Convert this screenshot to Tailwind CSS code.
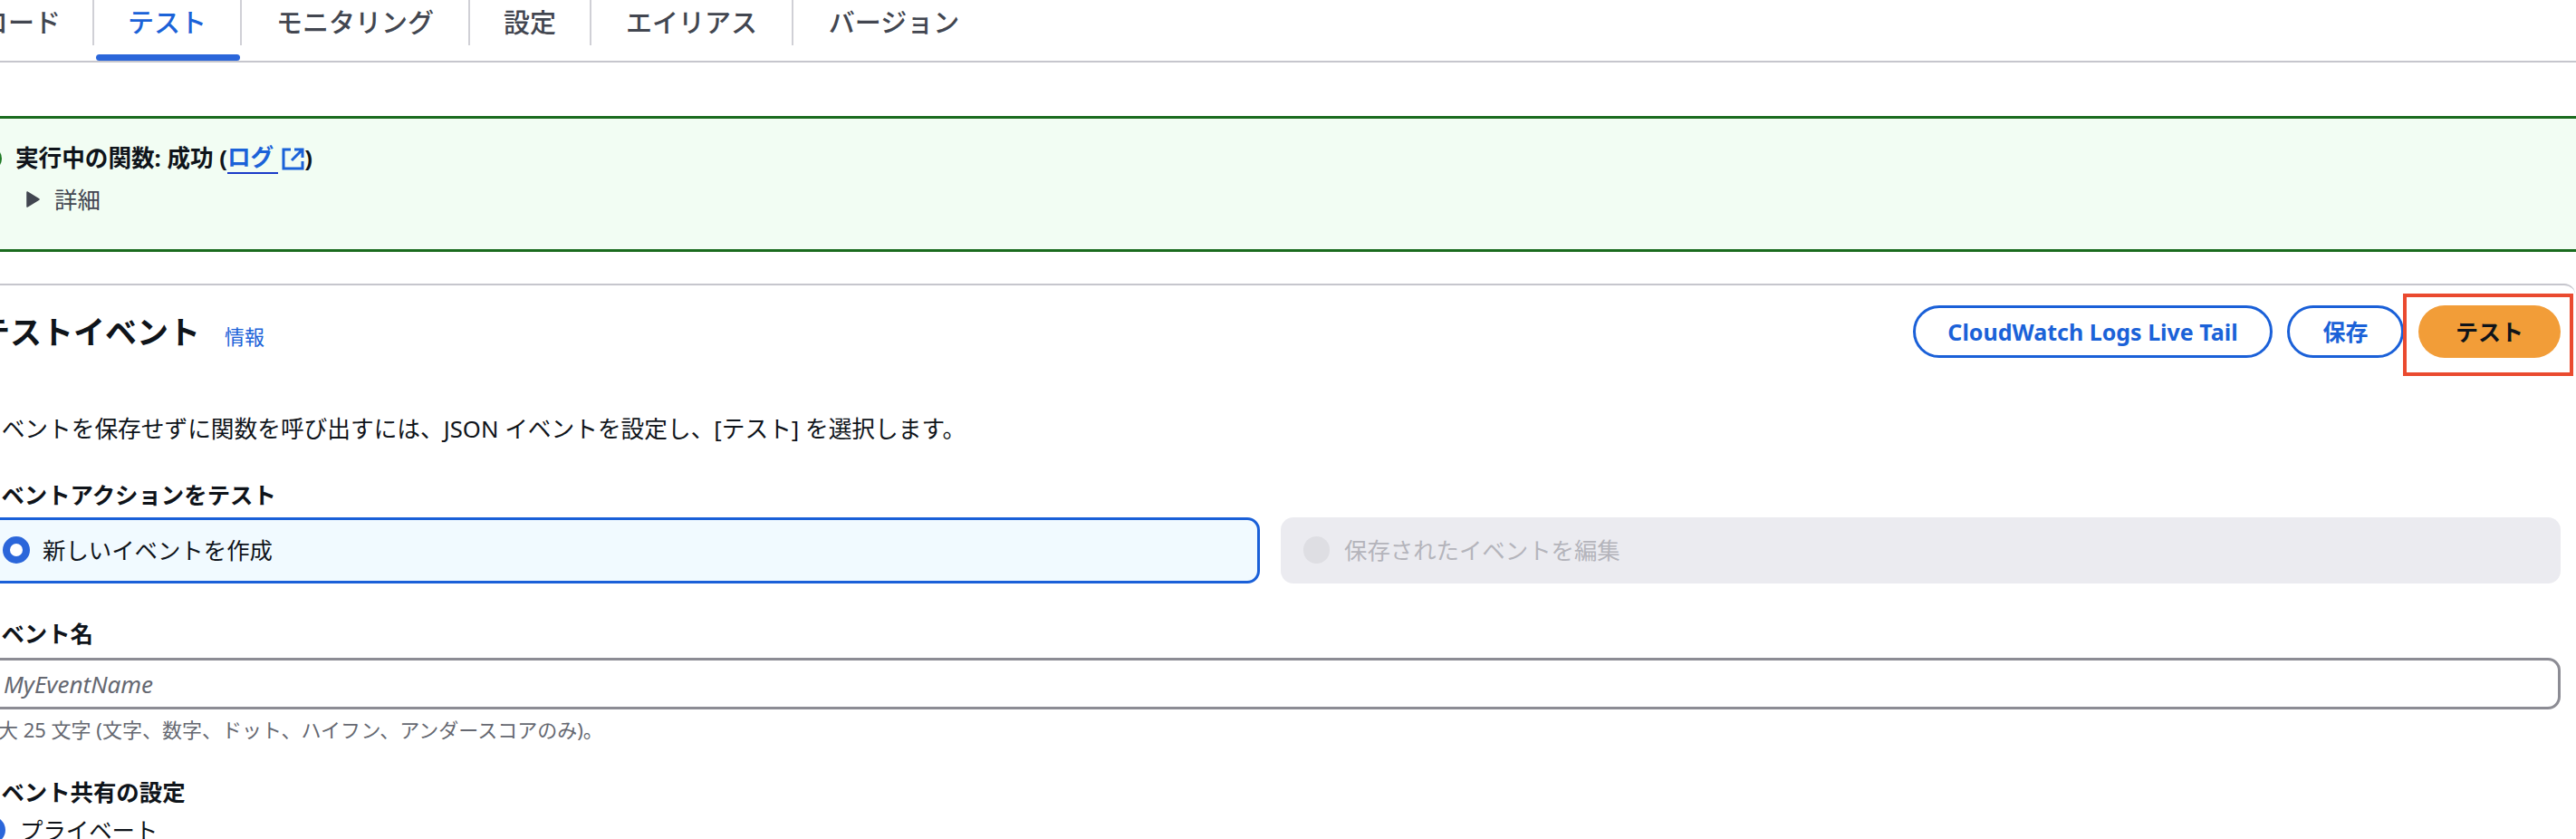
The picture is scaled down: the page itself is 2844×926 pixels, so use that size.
<!doctype html>
<html lang="ja">
<head>
<meta charset="utf-8">
<script src="https://cdn.jsdelivr.net/npm/@tailwindcss/browser@4"></script>
</head>
<body class="bg-white overflow-hidden font-['Noto_Sans','Noto_Sans_CJK_JP',sans-serif] text-[25.4px] leading-[36px] text-[#0f141a]">
<div class="relative w-[2844px] h-[926px] overflow-hidden">
  <!-- tabs -->
  <nav class="flex items-start h-[69px] border-b-2 border-[#c6c6cd] -ml-[59px] font-medium text-[29px] text-[#424650]">
    <div class="w-[163px] h-[50px] flex items-center justify-center border-r-2 border-[#d0d0d6]"><span class="relative left-[2px]">コード</span></div>
    <div class="relative w-[163px] h-[50px] flex items-center justify-center border-r-2 border-[#d0d0d6] text-[#1b62d8]">テスト<span class="absolute left-[2px] right-[0px] top-[60px] h-[7px] rounded-full bg-[#2b66da]"></span></div>
    <div class="w-[252px] h-[50px] flex items-center justify-center border-r-2 border-[#d0d0d6]">モニタリング</div>
    <div class="w-[134px] h-[50px] flex items-center justify-center border-r-2 border-[#d0d0d6]">設定</div>
    <div class="w-[223px] h-[50px] flex items-center justify-center border-r-2 border-[#d0d0d6]">エイリアス</div>
    <div class="w-[212px] h-[50px] flex items-center justify-center pl-[10px]">バージョン</div>
  </nav>

  <!-- alert -->
  <section class="mt-[59px] h-[150px] -ml-[30px] w-[2874px] border-y-[3px] border-[#1a6b1e] bg-[#f2fdf3] pl-[47px] pt-[26px]">
    <div class="relative flex items-center font-bold h-[36px] text-[25.6px]">
      <svg class="absolute left-[-41px] top-[5px] w-[26px] h-[26px]" viewBox="0 0 26 26"><circle cx="13" cy="13" r="13" fill="#1f7a24"/></svg>
      <span>実行中の関数: 成功 (</span><span class="text-[#1b62d8] border-b-2 border-[#1a3bc8] pr-[5px] leading-[32px]">ログ</span><svg class="ml-[4px] w-[25px] h-[25px]" viewBox="0 0 25 25" fill="none" stroke="#1b62d8" stroke-width="3"><path d="M10 2H2v21h21v-8M14 2h9v9M23 2 11 14"/></svg><span>)</span>
    </div>
    <div class="flex items-center h-[36px] mt-[9px] pl-[12px] text-[#424650]">
      <svg class="w-[15px] h-[18px] mr-[16px]" viewBox="0 0 15 18"><path d="M1 1l13 8L1 17z" fill="#424650" stroke="#424650" stroke-width="1.5" stroke-linejoin="round"/></svg>詳細
    </div>
  </section>

  <!-- card -->
  <section class="mt-[35px] -ml-[24px] w-[2867px] border-t-2 border-[#c6c6cd] rounded-tr-[12px]">
    <div class="relative flex items-start h-[80px] pt-[22px] pr-[16px]">
      <h2 class="mt-[2px] font-bold text-[35px] leading-[56px]">テストイベント</h2>
      <a class="ml-[27px] mt-[19px] text-[22px] leading-[30px] text-[#1b62d8]">情報</a>
      <div class="ml-auto flex gap-[16px] items-center text-[25px]">
        <button class="h-[58px] w-[397px] rounded-full border-[3px] border-[#1a60d8] font-bold text-[#1b62d8]">CloudWatch Logs Live Tail</button>
        <button class="h-[58px] w-[129px] rounded-full border-[3px] border-[#1a60d8] font-bold text-[#1b62d8]">保存</button>
        <button class="h-[58px] w-[157px] rounded-full bg-[#f29d38] font-bold text-[#0f141a]">テスト</button>
      </div>
    </div>
    <p class="mt-[61px] h-[36px] text-[25.7px]">イベントを保存せずに関数を呼び出すには、JSON イベントを設定し、[テスト] を選択します。</p>
    <label class="block mt-[36px] h-[36px] font-bold">イベントアクションをテスト</label>
    <div class="mt-[7px] pr-[16px] grid grid-cols-[1415px_1fr] gap-[23px]">
      <div class="h-[73px] border-[3px] border-[#1a60d8] rounded-[14px] bg-[#f1faff] flex items-center pl-[24px] pb-[2px]">
        <span class="w-[30px] h-[30px] rounded-full border-[8px] border-[#2b66da] bg-white mr-[14px]"></span>新しいイベントを作成
      </div>
      <div class="h-[73px] rounded-[14px] bg-[#ebebf0] flex items-center pl-[25px] pb-[2px] text-[#b4b4bb]">
        <span class="w-[29px] h-[30px] rounded-full bg-[#dedee3] mr-[16px]"></span>保存されたイベントを編集
      </div>
    </div>
    <label class="block mt-[37px] h-[36px] font-bold">イベント名</label>
    <div class="mt-[9px] pr-[16px]">
      <div class="h-[57px] border-[3px] border-[#8c8c94] rounded-[14px] flex items-center pl-[25px] italic text-[26px] text-[#656871]">MyEventName</div>
    </div>
    <p class="mt-[6px] text-[22px] leading-[32px] text-[#656871]">最大 25 文字 (文字、数字、ドット、ハイフン、アンダースコアのみ)。</p>
    <label class="block mt-[35px] h-[36px] font-bold">イベント共有の設定</label>
    <div class="mt-[6px] flex items-center">
      <span class="w-[30px] h-[30px] rounded-full border-[8px] border-[#2b66da] bg-white mr-[16px]"></span>プライベート
    </div>
  </section>

  <!-- annotation -->
  <div class="absolute left-[2653px] top-[324px] w-[188px] h-[91px] border-[4px] border-[#ea4a2f]"></div>
</div>
</body>
</html>
